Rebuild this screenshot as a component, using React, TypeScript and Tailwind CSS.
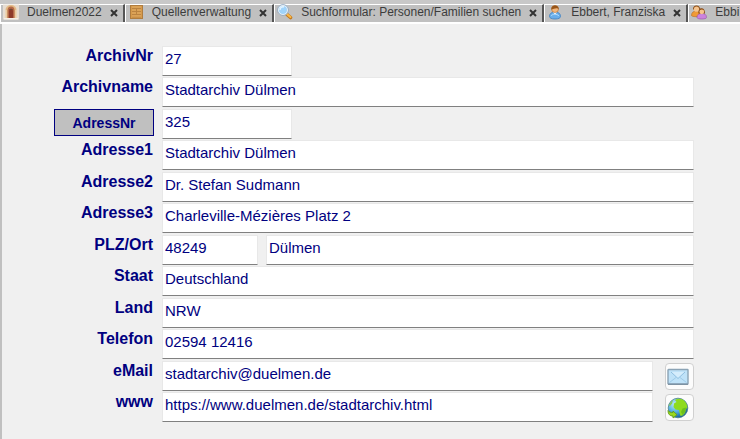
import type { ReactNode } from 'react'

interface Tab {
  title: string
  icon: ReactNode
  closable: boolean
}

interface Field {
  id: string
  label: string
  value: string
  size: 'short' | 'full'
}

function ArchiveIcon() {
  return (
    <svg viewBox="0 0 16 16" className="size-4 shrink-0" aria-hidden="true">
      <rect width="16" height="15" y="0.5" fill="#e6ddd2" />
      <path d="M2.5 14V6a5.500 5 0 0 1 11 0v8z" fill="#e3b985" />
      <path d="M4.500 14V6.500a3.500 4 0 0 1 7 0V14z" fill="#b56a48" />
      <path d="M6 14V7a2 2.500 0 0 1 4 0v7z" fill="#8e3a2a" />
      <path d="M6.500 5.500h3" stroke="#6f4a35" />
      <path d="M1 14h14v1.500H1z" fill="#f5efe6" />
      <path d="M3 6v8M13 6v8" stroke="#f3dfc0" />
    </svg>
  )
}

function CabinetIcon() {
  return (
    <svg viewBox="0 0 16 16" className="size-4 shrink-0" aria-hidden="true">
      <rect x="2.5" y="1.5" width="12" height="13" fill="#d69a4c" stroke="#b07d3f" />
      <path d="M4 4.5h9M4 7.5h9M4 10.5h9M4 13h9" stroke="#bb8340" />
      <path d="M4 3h9M4 6h9M4 9h9M4 12h9" stroke="#e0ab63" />
      <path d="M8 6h1M8 9h1" stroke="#9a6528" />
    </svg>
  )
}

function SearchIcon() {
  return (
    <svg viewBox="0 0 16 16" className="size-4 shrink-0" aria-hidden="true">
      <path d="M10 10.5l3.5 3" stroke="#c47a1c" strokeWidth="3.6" strokeLinecap="round" />
      <path d="M10.4 10.4l3 2.6" stroke="#f9b948" strokeWidth="2" strokeLinecap="round" />
      <circle cx="6" cy="6" r="4.8" fill="#9fd3fa" stroke="#f4f8fb" strokeWidth="1.6" />
      <circle cx="6" cy="6" r="5.4" fill="none" stroke="#7b98b5" strokeWidth="0.8" />
      <path d="M3 6a3 3 0 0 1 4-3" stroke="#e3f4ff" strokeWidth="1.4" fill="none" />
    </svg>
  )
}

function PersonIcon() {
  return (
    <svg viewBox="0 0 16 16" className="size-4 shrink-0" aria-hidden="true">
      <path
        d="M2.5 12.500c0-3 2-4.500 5.500-4.500s5.500 1.500 5.500 4.500c0 1.500-2 2.500-5.500 2.500s-5.500-1-5.500-2.500z"
        fill="#69aeea"
        stroke="#3d7fc0"
        strokeWidth="0.8"
      />
      <path d="M4 12c1-2 6-2.500 8 0" stroke="#b4dcfb" fill="none" />
      <path d="M6 8h4l-2 2.500z" fill="#fff" />
      <circle cx="8" cy="5" r="3.500" fill="#f3b77c" stroke="#a8662b" strokeWidth="0.6" />
      <path d="M4.300 5.500C3.800 0 12.200 0 11.700 5.500 10.500 3 7 4.500 4.300 5.500z" fill="#985518" />
    </svg>
  )
}

function FamilyIcon() {
  return (
    <svg viewBox="0 0 16 16" className="size-4 shrink-0" aria-hidden="true">
      <path d="M.5 11.500c0-3 2-4.500 4.500-4.500s4 1.500 4 4.500c0 1.500-8.500 1.500-8.500 0z" fill="#f09a35" stroke="#b86a1b" strokeWidth="0.6" />
      <path d="M2 5.500C1.500 0 9.500 0 9 5.500z" fill="#8b4a12" />
      <circle cx="5.500" cy="5.200" r="2.600" fill="#f6c48d" />
      <path d="M6 13.500c0-3 2-4 4.800-4s4.700 1 4.700 4c0 2-9.500 2-9.500 0z" fill="#cc83dc" stroke="#9651a8" strokeWidth="0.6" />
      <path d="M7.500 9.500C6.500 2.500 14.500 2.500 14 9.500z" fill="#8b4a12" />
      <circle cx="10.800" cy="7.800" r="2.400" fill="#f6c48d" />
    </svg>
  )
}

function CloseIcon() {
  return (
    <svg viewBox="0 0 8 8" className="size-2" aria-hidden="true">
      <path d="M1 1l6 6M7 1L1 7" stroke="#333" strokeWidth="2" />
    </svg>
  )
}

function MailIcon() {
  return (
    <svg viewBox="0 0 22 18" className="h-[18px] w-[22px]" aria-hidden="true">
      <rect x="1" y="1.500" width="20" height="14.500" rx="0.500" fill="#bfe2f8" stroke="#8ba3b5" strokeWidth="1.400" />
      <path d="M2.500 14.500l6.500-5M19.500 14.500l-6.500-5" stroke="#9fcbe8" fill="none" />
      <path d="M4 4l7 6.500L18 4z" fill="#d5edfc" />
      <path d="M4 4l7 6.500L18 4" stroke="#8fbfe0" fill="none" />
      <path d="M1 16.300h20" stroke="#74899a" />
    </svg>
  )
}

function GlobeIcon() {
  return (
    <svg viewBox="0 0 22 22" className="size-[22px]" aria-hidden="true">
      <defs>
        <radialGradient id="sea" cx="0.350" cy="0.300" r="0.750">
          <stop offset="0" stopColor="#c4ebfb" />
          <stop offset="0.500" stopColor="#58b4e4" />
          <stop offset="1" stopColor="#145a94" />
        </radialGradient>
      </defs>
      <circle cx="11" cy="11" r="9.800" fill="url(#sea)" stroke="#4a7f86" strokeWidth="0.800" />
      <path
        d="M8 3c3-2 7-1.500 9.500 1 1.800 1.700 2.800 4 2.800 6.500l-1.500 2-.8 3.500-2.500 2.500-2 .5-1-3.500-.5-2.500-3.500-.5-2-2.500.5-3.500 2.500-1.500z"
        fill="#8edb1f"
      />
      <path d="M14 15l1.500-3.500 3.500-1-.8 4.500-2.700 3z" fill="#6cc01c" />
      <path d="M2 8.500c.7-2 2-4 4-5.200l-1 3.200-2 2.500z" fill="#8ecf4a" />
      <path
        d="M1 13.500c1 1.500 2.500 2 5 2V14l4 3.700L6 21v-2c-3 0-5-1.500-5-5.500z"
        fill="#9bd81d"
        stroke="#5f9a12"
        strokeWidth="0.800"
      />
    </svg>
  )
}

const tabs: Tab[] = [
  { title: 'Duelmen2022', icon: <ArchiveIcon />, closable: true },
  { title: 'Quellenverwaltung', icon: <CabinetIcon />, closable: true },
  {
    title: 'Suchformular: Personen/Familien suchen',
    icon: <SearchIcon />,
    closable: true,
  },
  { title: 'Ebbert, Franziska', icon: <PersonIcon />, closable: true },
  { title: 'Ebbi', icon: <FamilyIcon />, closable: false },
]

const archiveFields: Field[] = [
  { id: 'archivNr', label: 'ArchivNr', value: '27', size: 'short' },
  { id: 'archivname', label: 'Archivname', value: 'Stadtarchiv Dülmen', size: 'full' },
]

const addressFields: Field[] = [
  { id: 'adresse1', label: 'Adresse1', value: 'Stadtarchiv Dülmen', size: 'full' },
  { id: 'adresse2', label: 'Adresse2', value: 'Dr. Stefan Sudmann', size: 'full' },
  { id: 'adresse3', label: 'Adresse3', value: 'Charleville-Mézières Platz 2', size: 'full' },
]

const contactFields: Field[] = [
  { id: 'staat', label: 'Staat', value: 'Deutschland', size: 'full' },
  { id: 'land', label: 'Land', value: 'NRW', size: 'full' },
  { id: 'telefon', label: 'Telefon', value: '02594 12416', size: 'full' },
]

const rowClass = 'flex h-[31px] items-start gap-2 even:h-8'
const labelClass = 'w-[152px] shrink-0 pr-px text-right text-base leading-5 font-bold'
const inputClass =
  'h-[30px] min-w-0 border border-[#e8e8e8] border-b-[#808080] bg-white px-0.5 pb-1.5 text-[15px] outline-none'
const iconButtonClass =
  'ml-1 mt-0.5 flex h-[27px] w-[29px] shrink-0 items-center rounded border border-[#d0d0d0] bg-[#fcfcfc] pl-px'

function FieldRow({ field }: { field: Field }) {
  return (
    <div className={rowClass}>
      <label htmlFor={field.id} className={labelClass}>
        {field.label}
      </label>
      <input
        id={field.id}
        defaultValue={field.value}
        className={`${inputClass} ${field.size === 'short' ? 'w-[130px]' : 'flex-1'}`}
      />
    </div>
  )
}

function TabBar() {
  return (
    <nav className="flex overflow-hidden border-t-4 border-b-2 border-t-[#c8c8c8] border-b-white bg-[#c0c0c0]">
      {tabs.map((tab) => (
        <div
          key={tab.title}
          className="flex h-[18px] shrink-0 items-center border-t border-r-2 border-l border-t-white border-r-[#555] border-l-white pr-[5px] pb-0.5 pl-0.5 last:flex-1 last:border-r-0"
        >
          <button
            type="button"
            className="flex items-center gap-2 pb-0.5 text-xs leading-4 whitespace-nowrap text-[#3c3c3c]"
          >
            {tab.icon}
            {tab.title}
          </button>
          {tab.closable && (
            <button type="button" aria-label={`${tab.title} schließen`} className="ml-2">
              <CloseIcon />
            </button>
          )}
        </div>
      ))}
    </nav>
  )
}

export default function App() {
  return (
    <div className="flex min-h-screen flex-col bg-[#f0f0f0] font-['Liberation_Sans',Arial,sans-serif]">
      <TabBar />
      <form
        className="flex-1 border-l-2 border-[#c0c0c0] pt-[22px] pr-[46px] text-[#000080]"
        onSubmit={(e) => e.preventDefault()}
      >
        {archiveFields.map((field) => (
          <FieldRow key={field.id} field={field} />
        ))}
        <div className={rowClass}>
          <div className="flex w-[152px] shrink-0 justify-end">
            <button
              type="button"
              className="h-[27px] w-[100px] border border-[#000080] bg-[#c0c0c0] text-sm font-bold"
            >
              AdressNr
            </button>
          </div>
          <input
            aria-label="AdressNr"
            defaultValue="325"
            className={`${inputClass} w-[130px]`}
          />
        </div>
        {addressFields.map((field) => (
          <FieldRow key={field.id} field={field} />
        ))}
        <div className={rowClass}>
          <label htmlFor="plz" className={labelClass}>
            PLZ/Ort
          </label>
          <input id="plz" defaultValue="48249" className={`${inputClass} w-24`} />
          <input aria-label="Ort" defaultValue="Dülmen" className={`${inputClass} flex-1`} />
        </div>
        {contactFields.map((field) => (
          <FieldRow key={field.id} field={field} />
        ))}
        <div className={rowClass}>
          <label htmlFor="email" className={labelClass}>
            eMail
          </label>
          <input
            id="email"
            defaultValue="stadtarchiv@duelmen.de"
            className={`${inputClass} flex-1`}
          />
          <button type="button" aria-label="eMail senden" className={iconButtonClass}>
            <MailIcon />
          </button>
        </div>
        <div className={rowClass}>
          <label htmlFor="www" className={labelClass}>
            www
          </label>
          <input
            id="www"
            defaultValue="https://www.duelmen.de/stadtarchiv.html"
            className={`${inputClass} flex-1`}
          />
          <button type="button" aria-label="Webseite öffnen" className={iconButtonClass}>
            <GlobeIcon />
          </button>
        </div>
      </form>
    </div>
  )
}
